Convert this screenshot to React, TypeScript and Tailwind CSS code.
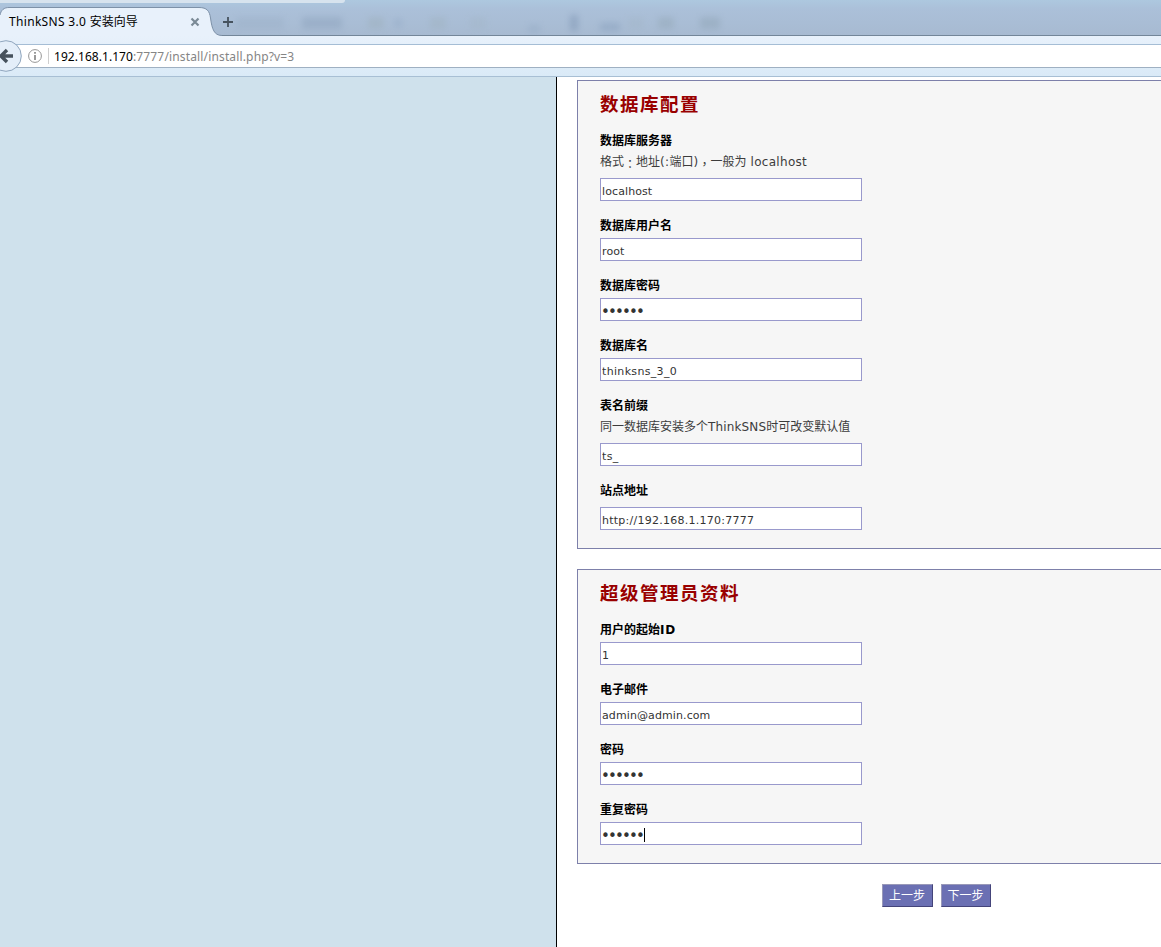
import React from "react";

type FieldProps = {
  label: React.ReactNode;
  value: string;
  hint?: React.ReactNode;
  password?: boolean;
  focused?: boolean;
  labelGap?: string;
  tracking?: string;
};

function Field({
  label,
  value,
  hint,
  password,
  focused,
  labelGap = "mb-1",
  tracking = "tracking-[0.1px]",
}: FieldProps) {
  return (
    <div className="mb-[15px]">
      <label className={`block h-[18px] pt-px text-[12px] leading-[18px] font-bold whitespace-nowrap text-black ${labelGap}`}>
        {label}
      </label>
      {hint && (
        <p className="-mt-px mb-2 h-[18px] pt-px text-[12px] leading-[18px] whitespace-nowrap text-[#3c3c3c]">{hint}</p>
      )}
      <div className="relative h-[23px] w-[262px]">
        <input
          type={password ? "password" : "text"}
          defaultValue={value}
          className={
            password
              ? "block h-[23px] w-[262px] border border-[#9999cc] bg-white pt-[5px] text-[15px] leading-[16px] tracking-[-1.85px] text-[#333] outline-none"
              : `block h-[23px] w-[262px] border border-[#9999cc] bg-white pt-[3px] pl-px text-[11px] text-[#333] outline-none ${tracking}`
          }
        />
        {focused && <span className="absolute top-[6px] left-[44px] h-[14px] w-px bg-black" />}
      </div>
    </div>
  );
}

function Panel({ title, children }: { title: string; children: React.ReactNode }) {
  return (
    <section className="w-[720px] border border-[#7d80aa] bg-[#f6f6f6] px-[22px] pt-[11px] pb-[3px]">
      <h2 className="mb-[13px] h-[26px] text-[18.500px] leading-[26px] font-bold tracking-[1.500px] whitespace-nowrap text-[#990000]">
        {title}
      </h2>
      {children}
    </section>
  );
}

function TabStrip() {
  return (
    <div className="relative h-9 overflow-hidden bg-linear-to-b from-[#adc8df] via-[#abc0d9] via-25% to-[#a7bad1]">
      <div className="absolute top-0 left-0 h-[3px] w-[345px] rounded-br bg-[#dce6f0]/90" />
      <div className="absolute top-[13px] left-[236px] flex items-center opacity-40 blur-[3px]">
        <span className="h-3 w-12 bg-[#8fa5bc]/60" />
        <span className="ml-[18px] h-3 w-10 bg-[#879db8]" />
        <span className="ml-[26px] h-3 w-4 bg-[#9baeb8]" />
        <span className="ml-[10px] h-2 w-2 bg-[#849ebc]/80" />
        <span className="ml-[28px] h-3 w-4 bg-[#9baeb8]/80" />
        <span className="ml-[24px] h-3 w-4 bg-[#9fb2c0]/70" />
        <span className="mt-3 ml-[42px] h-2 w-3 bg-[#90a7c2]" />
        <span className="ml-[30px] h-4 w-2 bg-[#7089a9]" />
        <span className="mt-2 ml-[22px] h-2 w-5 bg-[#7f98b7]" />
        <span className="ml-[8px] h-3 w-4 bg-[#9fb0be]/60" />
        <span className="ml-[14px] h-3 w-4 bg-[#90a4b2]" />
        <span className="ml-[26px] h-3 w-5 bg-[#8ba0b0]" />
      </div>
      <div className="absolute right-0 bottom-0 left-0 h-px bg-[#738699]" />
      <svg className="absolute top-0 left-0" width="226" height="36" viewBox="0 0 226 36">
        <path d="M0 36V15C1 10 4 7.500 9 7.500H199C207 7.500 209.500 11 210.500 18C212 29 214 35.500 222 35.500V36Z" fill="#e8f1fb" />
        <path d="M0 15C1 10 4 7.500 9 7.500H199C207 7.500 209.500 11 210.500 18C212 29 214 35.500 222 35.500" fill="none" stroke="#7d91a8" />
      </svg>
      <div className="relative flex h-9 items-center pt-[7px] pl-[9px]">
        <span className="w-[180px] text-[12px] leading-4 whitespace-nowrap text-black [font-family:'Noto_Sans','Noto_Sans_CJK_SC',sans-serif]">
          <span className="tracking-[0.32px]">ThinkSNS 3.0 </span>安装向导
        </span>
        <svg className="ml-[1px]" width="10" height="10" viewBox="0 0 10 10">
          <path d="M1.500 1.500L8.500 8.500M8.500 1.500L1.500 8.500" stroke="#7a8a96" strokeWidth="2.200" />
        </svg>
        <svg className="ml-[22px]" width="12" height="12" viewBox="0 0 12 12">
          <path d="M6 1V11M1 6H11" stroke="#46525e" strokeWidth="1.800" />
        </svg>
      </div>
    </div>
  );
}

function AddressBar() {
  return (
    <div className="relative h-[41px] border-b border-[#a8bfd4] bg-linear-to-b from-[#e8f1fb] to-[#daeaf7] pt-2">
      <div className="flex h-6 items-center border-y border-t-[#a5bdd5] border-b-[#9fb0c2] bg-white pl-[28px]">
        <svg width="14" height="14" viewBox="0 0 14 14">
          <circle cx="7" cy="7" r="6.400" fill="none" stroke="#969696" />
          <path d="M7 6V11M7 3V4.700" stroke="#888" strokeWidth="1.700" />
        </svg>
        <span className="ml-[6px] h-4 w-px bg-[#cfcfcf]" />
        <span className="ml-[5px] pt-[2px] text-[12px] leading-4 whitespace-nowrap text-[#858585] [font-family:'Noto_Sans',sans-serif]">
          <span className="tracking-[0.05px] text-black">192.168.1.170</span>
          <span className="tracking-[0.15px]">:7777/install/install.php?v=3</span>
        </span>
      </div>
      <svg className="absolute top-[4px] left-0" width="23" height="33" viewBox="0 0 23 33">
        <circle cx="6" cy="16" r="15.300" fill="#e4eef9" stroke="#8fa5bd" />
        <path d="M13 16H1.500M7 10L1 16L7 22" fill="none" stroke="#46515c" strokeWidth="3.400" />
      </svg>
    </div>
  );
}

function CenteredMark({ children }: { children: string }) {
  return (
    <span lang="zh-TW" className="inline-block h-[14px] translate-y-[2px] align-top [font-family:'Noto_Sans_CJK_TC',sans-serif]">
      {children}
    </span>
  );
}

const serverHint = (
  <>
    格式<CenteredMark>：</CenteredMark>地址<span className="tracking-[0.3px]">(:</span>端口
    <span className="tracking-[0.3px]">)</span>
    <CenteredMark>，</CenteredMark>一般为<span className="tracking-[0.3px]"> localhost</span>
  </>
);

const prefixHint = (
  <>
    同一数据库安装多个<span className="tracking-[0.15px]">ThinkSNS</span>时可改变默认值
  </>
);

export default function App() {
  return (
    <div className="flex h-[947px] w-[1161px] flex-col overflow-hidden bg-white [font-family:'DejaVu_Sans','Noto_Sans_CJK_SC',sans-serif]">
      <TabStrip />
      <AddressBar />
      <div className="flex min-h-0 flex-1">
        <aside className="w-[557px] shrink-0 border-r border-black bg-[#cfe1ec]" />
        <main className="shrink-0 pt-[3px] pl-5">
          <Panel title="数据库配置">
            <Field label="数据库服务器" hint={serverHint} value="localhost" />
            <Field label="数据库用户名" value="root" />
            <Field label="数据库密码" value="123456" password />
            <Field label="数据库名" value="thinksns_3_0" tracking="tracking-[0.33px]" />
            <Field label="表名前缀" hint={prefixHint} value="ts_" tracking="tracking-[0.4px]" />
            <Field label="站点地址" value="http://192.168.1.170:7777" labelGap="mb-2" tracking="tracking-[0.25px]" />
          </Panel>
          <div className="h-5" />
          <Panel title="超级管理员资料">
            <Field
              label={
                <>
                  用户的起始<span className="tracking-[0.8px]">ID</span>
                </>
              }
              value="1"
            />
            <Field label="电子邮件" value="admin@admin.com" />
            <Field label="密码" value="123456" password />
            <Field label="重复密码" value="123456" password focused />
          </Panel>
          <div className="mt-5 flex w-[718px] justify-center gap-2">
            <button className="h-[23px] w-[51px] border border-[#9999b8] border-r-[#44447a] border-b-[#44447a] bg-[#6b70b3] text-[12px] leading-[20px] text-white">
              上一步
            </button>
            <button className="h-[23px] w-[50px] border border-[#9999b8] border-r-[#44447a] border-b-[#44447a] bg-[#6b70b3] text-[12px] leading-[20px] text-white">
              下一步
            </button>
          </div>
        </main>
      </div>
    </div>
  );
}
